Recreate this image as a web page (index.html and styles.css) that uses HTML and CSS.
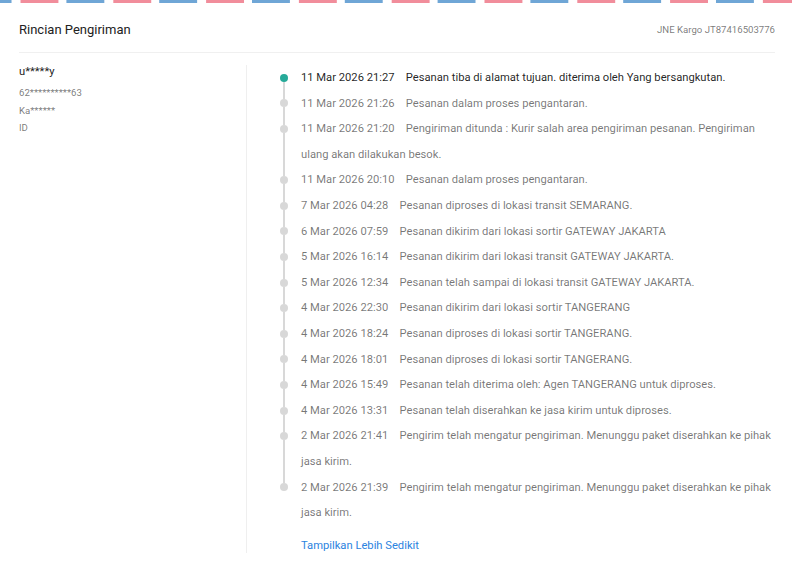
FILE: index.html
```html
<!DOCTYPE html>
<html lang="id">
<head>
<meta charset="utf-8" />
<title>Rincian Pengiriman</title>
<link rel="stylesheet" href="styles.css">
</head>

<body>
<div class="shipping-card">
	<div class="stripe"></div>
	<div class="card-head">
		<h3 class="title">Rincian Pengiriman</h3>
		<span class="courier">JNE Kargo JT87416503776</span>
	</div>

	<div class="card-body">
		<div class="address">
			<p class="name">u*****y</p>
			<p class="info">62**********63</p>
			<p class="info">Ka******</p>
			<p class="info">ID</p>
		</div>

		<div class="tracking">
			<ul class="timeline">
				<li class="step active">
					<span class="marker"><span class="dot"></span></span>
					<p class="text"><span class="time">11 Mar 2026 21:27</span>Pesanan tiba di alamat tujuan. diterima oleh Yang bersangkutan.</p>
				</li>
				<li class="step">
					<span class="marker"><span class="dot"></span></span>
					<p class="text"><span class="time">11 Mar 2026 21:26</span>Pesanan dalam proses pengantaran.</p>
				</li>
				<li class="step">
					<span class="marker"><span class="dot"></span></span>
					<p class="text"><span class="time">11 Mar 2026 21:20</span>Pengiriman ditunda : Kurir salah area pengiriman pesanan. Pengiriman ulang akan dilakukan besok.</p>
				</li>
				<li class="step">
					<span class="marker"><span class="dot"></span></span>
					<p class="text"><span class="time">11 Mar 2026 20:10</span>Pesanan dalam proses pengantaran.</p>
				</li>
				<li class="step">
					<span class="marker"><span class="dot"></span></span>
					<p class="text"><span class="time">7 Mar 2026 04:28</span>Pesanan diproses di lokasi transit SEMARANG.</p>
				</li>
				<li class="step">
					<span class="marker"><span class="dot"></span></span>
					<p class="text"><span class="time">6 Mar 2026 07:59</span>Pesanan dikirim dari lokasi sortir GATEWAY JAKARTA</p>
				</li>
				<li class="step">
					<span class="marker"><span class="dot"></span></span>
					<p class="text"><span class="time">5 Mar 2026 16:14</span>Pesanan dikirim dari lokasi transit GATEWAY JAKARTA.</p>
				</li>
				<li class="step">
					<span class="marker"><span class="dot"></span></span>
					<p class="text"><span class="time">5 Mar 2026 12:34</span>Pesanan telah sampai di lokasi transit GATEWAY JAKARTA.</p>
				</li>
				<li class="step">
					<span class="marker"><span class="dot"></span></span>
					<p class="text"><span class="time">4 Mar 2026 22:30</span>Pesanan dikirim dari lokasi sortir TANGERANG</p>
				</li>
				<li class="step">
					<span class="marker"><span class="dot"></span></span>
					<p class="text"><span class="time">4 Mar 2026 18:24</span>Pesanan diproses di lokasi sortir TANGERANG.</p>
				</li>
				<li class="step">
					<span class="marker"><span class="dot"></span></span>
					<p class="text"><span class="time">4 Mar 2026 18:01</span>Pesanan diproses di lokasi sortir TANGERANG.</p>
				</li>
				<li class="step">
					<span class="marker"><span class="dot"></span></span>
					<p class="text"><span class="time">4 Mar 2026 15:49</span>Pesanan telah diterima oleh: Agen TANGERANG untuk diproses.</p>
				</li>
				<li class="step">
					<span class="marker"><span class="dot"></span></span>
					<p class="text"><span class="time">4 Mar 2026 13:31</span>Pesanan telah diserahkan ke jasa kirim untuk diproses.</p>
				</li>
				<li class="step">
					<span class="marker"><span class="dot"></span></span>
					<p class="text"><span class="time">2 Mar 2026 21:41</span>Pengirim telah mengatur pengiriman. Menunggu paket diserahkan ke pihak jasa kirim.</p>
				</li>
				<li class="step">
					<span class="marker"><span class="dot"></span></span>
					<p class="text"><span class="time">2 Mar 2026 21:39</span>Pengirim telah mengatur pengiriman. Menunggu paket diserahkan ke pihak jasa kirim.</p>
				</li>
			</ul>
			<a class="toggle-link" href="#">Tampilkan Lebih Sedikit</a>
		</div>
	</div>
</div>
</body>
</html>
```

FILE: styles.css
```css
html, body{
	margin: 0;
	padding: 0;
	background: #fff;
}
body{
	font-family: Roboto, "Liberation Sans", Arial, sans-serif;
	color: rgba(0,0,0,.87);
}
p, h3, ul{
	margin: 0;
	padding: 0;
}

/* envelope edge */
.stripe{
	height: 3px;
	background-image: linear-gradient(90deg, #6fa6d6 0, #6fa6d6 38px, transparent 38px, transparent 46.4px, #f18d9b 46.4px, #f18d9b 84.8px, transparent 84.8px);
	background-size: 92.8px 3px;
	background-repeat: repeat-x;
	background-position-x: -26.4px;
}

.card-head{
	display: flex;
	justify-content: space-between;
	align-items: center;
	margin: 0 17px 0 19px;
	padding: 19px 0 14px;
	border-bottom: 1px solid #f0f0f0;
}
.card-head .title{
	font-size: 13px;
	font-weight: 400;
	line-height: 16px;
	color: #222;
}
.card-head .courier{
	font-size: 9.6px;
	line-height: 16px;
	color: rgba(0,0,0,.54);
}

.card-body{
	display: flex;
	margin: 0 17px 0 19px;
	padding-top: 12px;
}

.address{
	width: 227px;
	flex-shrink: 0;
	border-right: 1px solid #efefef;
}
.address .name{
	font-size: 11.2px;
	line-height: 14px;
	color: #222;
	margin-bottom: 5px;
}
.address .info{
	font-size: 9.6px;
	line-height: 17.6px;
	color: rgba(0,0,0,.54);
}

.tracking{
	flex: 1;
	padding-left: 32.5px;
}
.timeline{
	list-style: none;
}
.step{
	display: flex;
	align-items: stretch;
}
.marker{
	width: 8px;
	flex-shrink: 0;
	display: flex;
	flex-direction: column;
	align-items: center;
	margin-right: 13.5px;
}
.marker::before{
	content: "";
	width: 2px;
	height: 8.8px;
	background: #d8d8d8;
}
.marker::after{
	content: "";
	width: 2px;
	flex: 1;
	background: #d8d8d8;
}
.step:first-child .marker::before,
.step:last-child .marker::after{
	background: transparent;
}
.dot{
	width: 8px;
	height: 8px;
	border-radius: 50%;
	background: #d8d8d8;
}
.step.active .dot{
	background: #26aa99;
}

.text{
	flex: 1;
	font-size: 11.2px;
	line-height: 25.6px;
	color: rgba(0,0,0,.54);
}
.step.active .text{
	color: rgba(0,0,0,.87);
}
.time{
	margin-right: 11.2px;
}

.toggle-link{
	display: inline-block;
	margin: 13.8px 0 0 21.5px;
	font-size: 11.2px;
	line-height: 14px;
	color: #2b83e0;
	text-decoration: none;
}
```
